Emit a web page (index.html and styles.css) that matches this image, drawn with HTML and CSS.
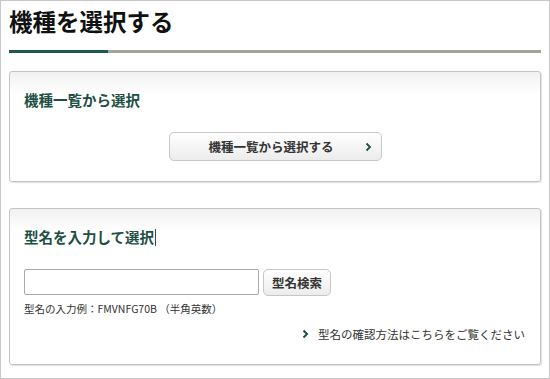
FILE: index.html
```html
<!DOCTYPE html>
<html lang="ja">
<head>
<meta charset="utf-8">
<link rel="stylesheet" href="styles.css">
</head>
<body>
<div class="page">
  <h1 class="title">機種を選択する</h1>
  <div class="rule"><span class="rule-accent"></span></div>

  <section class="panel panel-list">
    <h2 class="panel-title">機種一覧から選択</h2>
    <div class="center">
      <button class="btn-large" type="button">機種一覧から選択する<span class="chev">
        <svg width="7" height="10" viewBox="0 0 7 10"><path d="M1.5 1.5 L5 5 L1.5 8.5" fill="none" stroke="#1e4f43" stroke-width="1.8"/></svg></span></button>
    </div>
  </section>

  <section class="panel panel-input">
    <h2 class="panel-title">型名を入力して選択<span class="caret"></span></h2>
    <div class="search-row">
      <input class="search-input" type="text">
      <button class="btn-small" type="button">型名検索</button>
    </div>
    <p class="example">型名の入力例：FMVNFG70B （半角英数）</p>
    <div class="link-row">
      <a class="help-link" href="#"><svg class="link-chev" width="7" height="10" viewBox="0 0 7 10"><path d="M1.5 1.5 L5 5 L1.5 8.5" fill="none" stroke="#1e4f43" stroke-width="2"/></svg>型名の確認方法はこちらをご覧ください</a>
    </div>
  </section>
</div>
</body>
</html>
```

FILE: styles.css
```css
html, body {
  margin: 0;
  padding: 0;
  background: #fff;
}
body {
  font-family: "Noto Sans CJK JP", "Noto Sans", "Liberation Sans", sans-serif;
  color: #222;
}
.page {
  box-sizing: border-box;
  width: 550px;
  height: 379px;
  border: 1px solid #c8c8c8;
  padding: 0 8px;
  overflow: hidden;
}
.title {
  margin: 5px 0 0 0;
  font-size: 23.5px;
  line-height: 30px;
  font-weight: 700;
  color: #111;
}
.rule {
  margin-top: 14px;
  height: 3px;
  background: #a3a39b;
  display: flex;
}
.rule-accent {
  display: block;
  width: 99px;
  height: 3px;
  background: #1e5a4b;
}
.panel {
  border: 1px solid #c4c4c4;
  border-radius: 3px;
  background: linear-gradient(#f1f1f1, #ffffff 22px);
  box-shadow: 1px 1px 1px rgba(0,0,0,0.12);
}
.panel-list {
  margin-top: 18px;
  padding: 18px 14px 20px 14px;
}
.panel-input {
  margin-top: 26px;
  padding: 18px 15px 22px 14px;
}
.panel-title {
  margin: 0;
  font-size: 14.5px;
  line-height: 20px;
  font-weight: 700;
  color: #1e4f43;
  display: flex;
  align-items: center;
}
.caret {
  display: inline-block;
  width: 1px;
  height: 17px;
  background: #444;
  margin-left: 1px;
}
.center {
  display: flex;
  justify-content: center;
  margin-top: 22px;
}
.btn-large {
  position: relative;
  box-sizing: border-box;
  width: 213px;
  height: 29px;
  border: 1px solid #c8c8c8;
  border-radius: 5px;
  background: linear-gradient(#ffffff, #ececec);
  font-family: inherit;
  font-size: 12.5px;
  font-weight: 700;
  color: #333;
  padding: 0 8px 0 0;
  display: flex;
  align-items: center;
  justify-content: center;
}
.chev {
  position: absolute;
  right: 9px;
  top: 9px;
  display: flex;
}
.search-row {
  margin-top: 22px;
  display: flex;
  align-items: flex-start;
  gap: 4px;
}
.search-input {
  box-sizing: border-box;
  width: 235px;
  height: 26px;
  border: 1px solid #a9a9a9;
  border-radius: 2px;
  margin: 0;
  padding: 0 4px;
}
.btn-small {
  box-sizing: border-box;
  width: 68px;
  height: 27px;
  border: 1px solid #c6c6c6;
  border-radius: 5px;
  background: linear-gradient(#ffffff, #ececec);
  font-family: inherit;
  font-size: 12.5px;
  font-weight: 700;
  color: #333;
  padding: 0;
}
.example {
  margin: 6px 0 0 0;
  font-size: 10.5px;
  line-height: 14px;
  color: #333;
}
.link-row {
  margin-top: 10px;
  display: flex;
  justify-content: flex-end;
}
.help-link {
  display: flex;
  align-items: center;
  gap: 9px;
  font-size: 11.5px;
  line-height: 16px;
  color: #333;
  text-decoration: none;
}
.link-chev {
  display: block;
}
```
